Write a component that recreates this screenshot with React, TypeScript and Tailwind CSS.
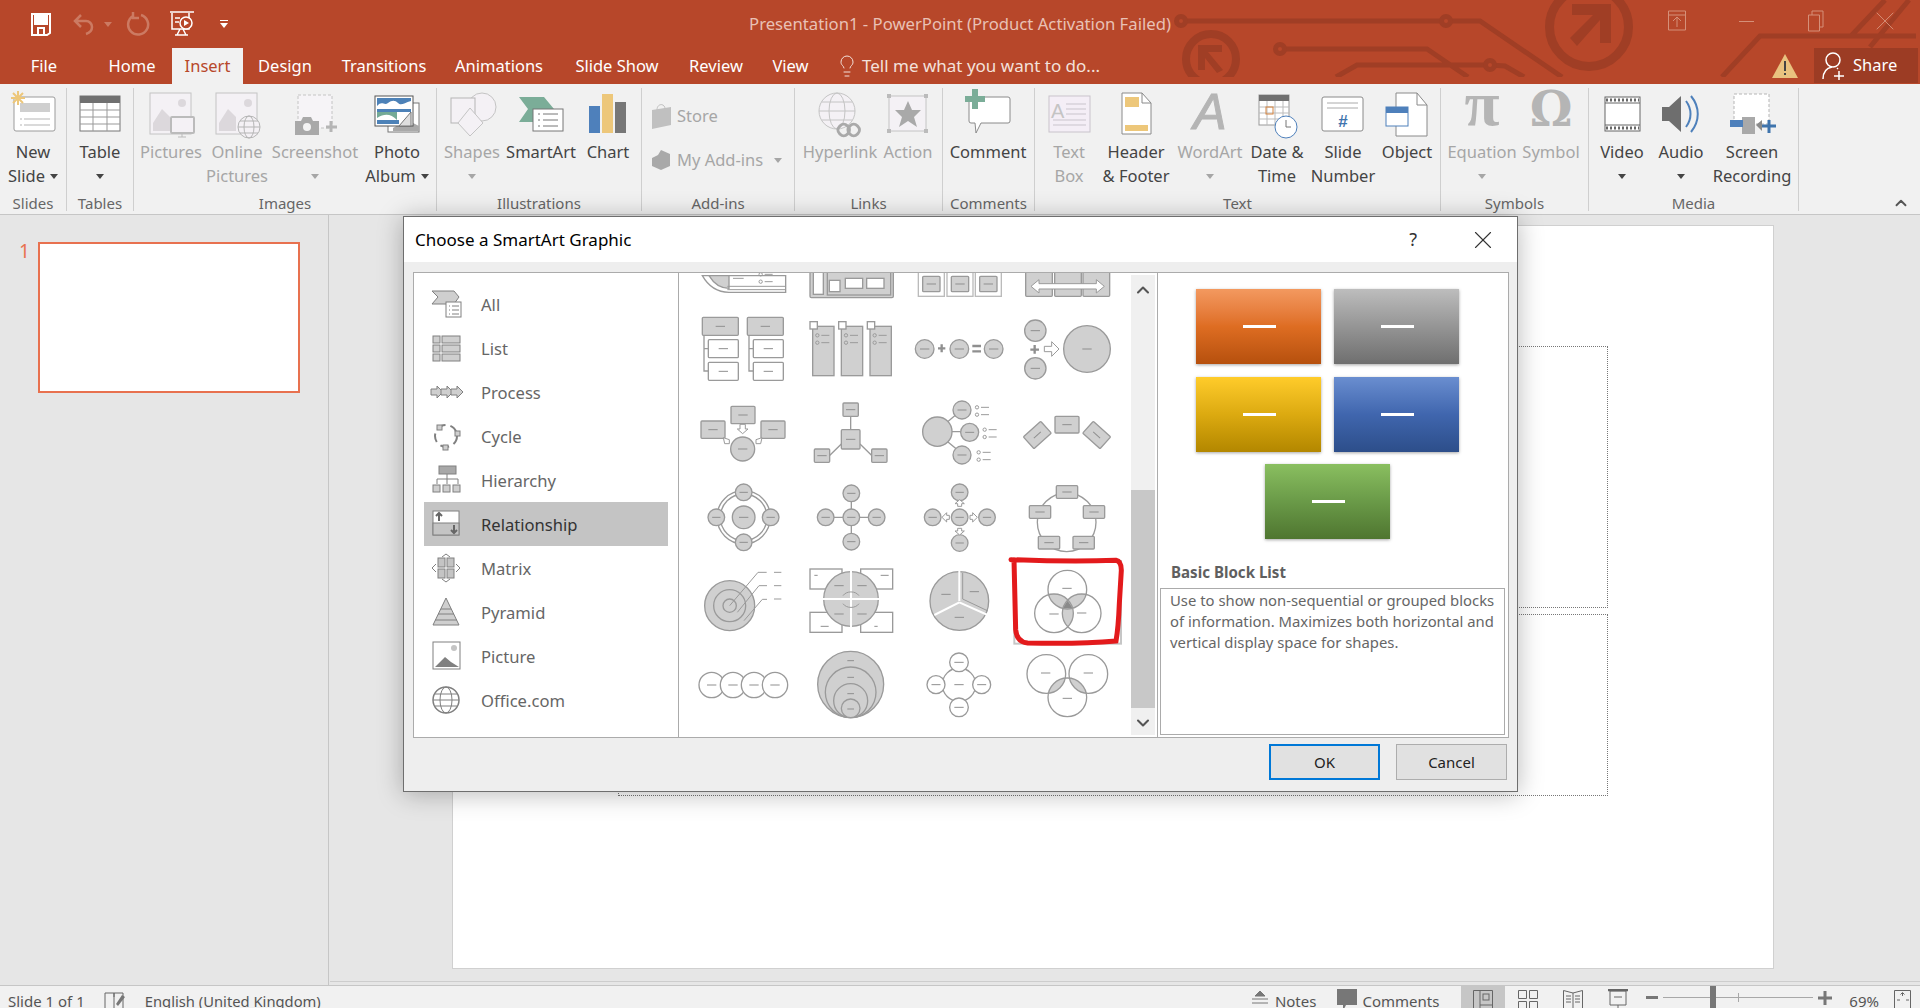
import type { ReactNode } from "react";
import { ChevronUp, ChevronDown, X, Lightbulb } from "lucide-react";

const LINE = "#9a9a9a";
const FILL = "#d0d0d0";

// ---- ribbon icons: x is relative to the button centre, y is page y
const Ic = ({ children }: { children: ReactNode }) => (
  <svg width={70} height={53} viewBox="-35 88 70 53" className="overflow-visible">
    {children}
  </svg>
);

const Caret = ({ className = "" }: { className?: string }) => (
  <svg width="8" height="5" viewBox="0 0 8 5" className={className}>
    <path d="M0 0h8L4 5z" fill="currentColor" />
  </svg>
);

const iconNewSlide = (
  <Ic>
    <rect x="-19" y="97" width="41" height="34" rx="2" fill="#fff" stroke="#9b9b9b" />
    <rect x="-13" y="103" width="30" height="9" fill="#cfcfcf" />
    <path d="M-13 119h2M-9 119h26M-13 125h2M-9 125h26" stroke="#b5b5b5" />
    <path d="M-15 91v14M-22 98h14M-20 93l10 10M-20 103l10-10" stroke="#edc77a" strokeWidth="2" />
  </Ic>
);
const iconTable = (
  <Ic>
    <rect x="-20" y="96" width="40" height="35" fill="#fff" stroke="#777" />
    <rect x="-20" y="96" width="40" height="7" fill="#707070" />
    <path d="M-20 110h40M-20 117h40M-20 124h40M-7 103v28M7 103v28" stroke="#999" />
  </Ic>
);
const iconPictures = (
  <Ic>
    <rect x="-21" y="93" width="41" height="41" fill="#f4f1f5" stroke="#c4c4c4" />
    <circle cx="11" cy="103" r="4" fill="#dcd8dc" />
    <path d="M-18 131v-8l9-14 8 8v14z" fill="#dcd8dc" />
    <rect x="0" y="117" width="23" height="16" rx="1" fill="#f4f1f5" stroke="#bbb" strokeWidth="2" />
    <path d="M11 133v4M7 137h8" stroke="#bbb" />
  </Ic>
);
const iconOnlinePictures = (
  <Ic>
    <rect x="-21" y="93" width="41" height="41" fill="#f4f1f5" stroke="#c4c4c4" />
    <circle cx="11" cy="103" r="4" fill="#dcd8dc" />
    <path d="M-18 131v-8l9-14 8 8v14z" fill="#dcd8dc" />
    <circle cx="12" cy="127" r="11" fill="#f4f1f5" stroke="#b5b5b5" />
    <ellipse cx="12" cy="127" rx="5" ry="11" fill="none" stroke="#b5b5b5" />
    <path d="M1 127h22M3 121h18M3 133h18" stroke="#b5b5b5" />
  </Ic>
);
const iconScreenshot = (
  <Ic>
    <rect x="-17" y="95" width="34" height="33" fill="#f6f4f7" stroke="#c4c4c4" strokeDasharray="3 2" />
    <path d="M-20 121h6l2-4h8l2 4h6v14h-24z" fill="#a9a9a9" />
    <circle cx="-8" cy="127" r="4" fill="#f4f4f4" />
    <path d="M16 121v11M11 127h11" stroke="#b5b5b5" strokeWidth="3" />
  </Ic>
);
const iconPhotoAlbum = (
  <Ic>
    <rect x="-9" y="103" width="31" height="29" fill="#fff" stroke="#777" />
    <path d="M-4 128l14-8 12 6v5H-4z" fill="#a9a9a9" />
    <rect x="-22" y="96" width="38" height="30" fill="#fff" stroke="#555" />
    <rect x="-20" y="98" width="34" height="14" fill="#4d82b8" />
    <path d="M-20 106c5-6 7 0 11-3s7-3 10 0 6 0 13-2v8h-34z" fill="#fff" />
    <path d="M-20 118c8-5 14-4 20 2v-8h-20z" fill="#74aa96" />
    <rect x="-20" y="120" width="22" height="4" fill="#4d82b8" />
    <path d="M2 126l12-14v14z" fill="#dfdfdf" stroke="#777" />
  </Ic>
);
const iconShapes = (
  <Ic>
    <circle cx="10" cy="107" r="14" fill="#f4f1f5" stroke="#c4c4c4" />
    <rect x="-21" y="98" width="24" height="25" fill="#f4f1f5" stroke="#b5b5b5" />
    <path d="M-2 108L11 123-2 136-14 123z" fill="#f4f1f5" stroke="#c4c4c4" />
  </Ic>
);
const iconSmartArt = (
  <Ic>
    <path d="M-22 97h25l10 12-10 13h-25l9-13z" fill="#7bad98" />
    <rect x="-8" y="109" width="30" height="22" fill="#fff" stroke="#777" />
    <path d="M-3 114h2M2 114h15M-3 120h2M2 120h15M-3 126h2M2 126h15" stroke="#777" />
  </Ic>
);
const iconChart = (
  <Ic>
    <rect x="-19" y="106" width="11" height="27" fill="#4e80bb" />
    <rect x="-6" y="94" width="11" height="39" fill="#edc77a" />
    <rect x="7" y="102" width="11" height="31" fill="#777" />
  </Ic>
);
const iconHyperlink = (
  <Ic>
    <circle cx="-3" cy="111" r="18" fill="#f4f1f5" stroke="#c4c4c4" />
    <ellipse cx="-3" cy="111" rx="8" ry="18" fill="none" stroke="#c4c4c4" />
    <path d="M-21 111h36M-18 102h30M-18 120h30" stroke="#c4c4c4" />
    <rect x="-2" y="125" width="11" height="11" rx="5" fill="none" stroke="#a9a9a9" strokeWidth="3" transform="rotate(-45 3 130)" />
    <rect x="8" y="125" width="11" height="11" rx="5" fill="none" stroke="#a9a9a9" strokeWidth="3" transform="rotate(-45 13 130)" />
  </Ic>
);
const iconAction = (
  <Ic>
    <rect x="-19" y="96" width="37" height="35" fill="#f4f1f5" stroke="#c4c4c4" />
    <path d="M-21 94h4v4h-4zM16 94h4v4h-4zM-21 129h4v4h-4zM16 129h4v4h-4z" fill="#bbb" />
    <path d="M0 101l4 9h9l-7 7 3 10-9-6-9 6 3-10-7-7h9z" fill="#a9a9a9" />
  </Ic>
);
const iconComment = (
  <Ic>
    <path d="M-17 97h37a2 2 0 012 2v22a2 2 0 01-2 2h-27l-5 10-1-10h-4a2 2 0 01-2-2V99a2 2 0 012-2z" fill="#fff" stroke="#8a8a8a" />
    <path d="M-13 89v20M-23 99h20" stroke="#7bad98" strokeWidth="6" />
  </Ic>
);
const iconTextBox = (
  <Ic>
    <rect x="-20" y="96" width="41" height="36" fill="#f4eef6" stroke="#c9c4cc" />
    <text x="-18" y="118" fontSize="20" fill="#c4c4c4" fontFamily="Liberation Sans, sans-serif">A</text>
    <path d="M-3 104h20M-3 109h20M-3 114h20M-16 120h33M-16 125h33" stroke="#c9c4cc" />
  </Ic>
);
const iconHeader = (
  <Ic>
    <path d="M-14 93h20l9 10v31h-29z" fill="#fff" stroke="#8a8a8a" />
    <path d="M6 93v10h9" fill="none" stroke="#8a8a8a" />
    <rect x="-11" y="97" width="14" height="10" fill="#edc77a" />
    <rect x="-11" y="125" width="23" height="6" fill="#edc77a" />
  </Ic>
);
const iconWordArt = (
  <Ic>
    <text x="0" y="129" textAnchor="middle" fontSize="50" fontStyle="italic" fill="#b5b5b5" stroke="#b5b5b5" strokeWidth="1" fontFamily="Liberation Sans, sans-serif">A</text>
  </Ic>
);
const iconDate = (
  <Ic>
    <rect x="-18" y="95" width="30" height="30" fill="#fff" stroke="#999" />
    <rect x="-18" y="95" width="30" height="6" fill="#707070" />
    <path d="M-18 107h30M-18 113h30M-18 119h30M-10 101v24M-2 101v24M6 101v24" stroke="#bbb" />
    <rect x="-11" y="107" width="7" height="7" fill="none" stroke="#d6843e" />
    <circle cx="9" cy="127" r="11" fill="#fff" stroke="#4e80bb" />
    <path d="M9 120v7h5" fill="none" stroke="#777" />
  </Ic>
);
const iconSlideNumber = (
  <Ic>
    <rect x="-21" y="97" width="41" height="34" rx="2" fill="#fff" stroke="#8a8a8a" />
    <path d="M-16 103h31M-16 108h31" stroke="#aaa" />
    <text x="0" y="127" textAnchor="middle" fontSize="17" fontWeight="700" fill="#3f74ad" fontFamily="Liberation Sans, sans-serif">#</text>
  </Ic>
);
const iconObject = (
  <Ic>
    <path d="M-11 93h21l10 12v31h-31z" fill="#fff" stroke="#8a8a8a" />
    <path d="M10 93v12h10" fill="none" stroke="#8a8a8a" />
    <rect x="-21" y="107" width="22" height="19" fill="#fff" stroke="#4e80bb" />
    <rect x="-21" y="107" width="22" height="6" fill="#4e80bb" />
  </Ic>
);
const iconPi = (
  <Ic>
    <text x="0" y="125" textAnchor="middle" fontSize="64" fontWeight="700" fill="#b5b5b5" fontFamily="Liberation Serif, serif">π</text>
  </Ic>
);
const iconOmega = (
  <Ic>
    <text x="0" y="126" textAnchor="middle" fontSize="48" fontWeight="700" fill="#b5b5b5" fontFamily="DejaVu Serif, serif">Ω</text>
  </Ic>
);
const iconVideo = (
  <Ic>
    <rect x="-17" y="97" width="35" height="34" fill="#fff" stroke="#666" />
    <path d="M-17 103h35M-17 125h35" stroke="#666" />
    <path d="M-16 100h33M-16 128h33" stroke="#666" strokeWidth="3" strokeDasharray="2 2" />
  </Ic>
);
const iconAudio = (
  <Ic>
    <path d="M-19 107h7l12-11v36l-12-11h-7z" fill="#6e6e6e" />
    <path d="M5 101c6 8 6 18 0 26M10 96c9 11 9 25 0 36" fill="none" stroke="#4e80bb" strokeWidth="2" />
  </Ic>
);
const iconScreenRec = (
  <Ic>
    <rect x="-18" y="94" width="35" height="30" fill="#fff" stroke="#b5b5b5" strokeDasharray="3 2" />
    <rect x="-10" y="117" width="13" height="17" fill="#a9a9a9" />
    <path d="M4 125l6-5v11z" fill="#8a8a8a" />
    <rect x="-22" y="120" width="13" height="7" fill="#4e80bb" />
    <path d="M17 120v13M10 126h14" stroke="#3f74ad" strokeWidth="3" />
  </Ic>
);

// ---- ribbon
type Btn = {
  w: number;
  lines: string[];
  icon: ReactNode;
  off?: boolean;
  caret?: "inline" | "below";
};

const RibbonBtn = ({ w, lines, icon, off, caret }: Btn) => (
  <div
    style={{ width: w }}
    className={`flex flex-col items-center shrink-0 ${off ? "text-[#a6a6a6]" : "text-[#444]"}`}
  >
    <div className="h-[53px]">{icon}</div>
    <div className="-mt-[1px] text-[16.5px] leading-[24px] text-center whitespace-nowrap">
      {lines.map((l, i) => (
        <div key={l} className="flex items-center justify-center gap-[5px]">
          {l}
          {caret === "inline" && i === lines.length - 1 && <Caret />}
        </div>
      ))}
      {caret === "below" && (
        <div className="h-[24px] flex items-center justify-center">
          <Caret />
        </div>
      )}
    </div>
  </div>
);

const Group = ({
  w,
  label,
  pl = 0,
  children,
}: {
  w: number;
  label: string;
  pl?: number;
  children: ReactNode;
}) => (
  <div style={{ width: w }} className="h-[123px] shrink-0 border-r border-[#cfcfcf]">
    <div style={{ paddingLeft: pl }} className="h-[105px] flex">
      {children}
    </div>
    <div className="h-[18px] leading-[20px] text-center text-[15px] text-[#666] whitespace-nowrap">
      {label}
    </div>
  </div>
);

const tabs = [
  { t: "File", w: 88 },
  { t: "Home", w: 80, ml: 4 },
  { t: "Insert", w: 71, on: true },
  { t: "Design", w: 84 },
  { t: "Transitions", w: 114 },
  { t: "Animations", w: 116 },
  { t: "Slide Show", w: 120 },
  { t: "Review", w: 78 },
  { t: "View", w: 71 },
];

const TitleArt = () => (
  <svg width="760" height="77" viewBox="1160 0 760 77" className="absolute right-0 top-0">
    <g fill="none" stroke="#a03e25" strokeWidth="5">
      <path d="M1186 21h294l82 56M1280 49h147l41 28M1336 77l21-12h133l15 1 19 11" />
      <path d="M1722 77l38-41h156M1851 36l34-36M1870 47l39-47" />
      <circle cx="1589" cy="27" r="39.5" strokeWidth="9" />
      <circle cx="1211" cy="59" r="25" strokeWidth="8" />
      <circle cx="1181" cy="21" r="4.5" fill="#b7472a" />
      <circle cx="1446" cy="21" r="4.5" fill="#b7472a" />
      <circle cx="1280" cy="49" r="4.5" fill="#b7472a" />
      <circle cx="1490" cy="65" r="4.5" fill="#b7472a" />
    </g>
    <path d="M1572 4h39v39h-11V20l-23 26-7-8 23-23h-21z" fill="#a03e25" />
    <path d="M1198 45h24v7h-14l15 18-6 3-12-15v12h-7z" fill="#a03e25" />
  </svg>
);

// ---- smartart gallery, coordinates are 3x the page px
const Dash = ({ x, y, w = 28 }: { x: number; y: number; w?: number }) => (
  <path d={`M${x - w / 2} ${y}h${w}`} stroke="#8f8f8f" strokeWidth="3" />
);
const C = ({ x, y, r, white, dash = true }: { x: number; y: number; r: number; white?: boolean; dash?: boolean }) => (
  <>
    <circle cx={x} cy={y} r={r} fill={white ? "#fff" : FILL} stroke={LINE} strokeWidth="4" />
    {dash && <Dash x={x} y={y} w={Math.min(28, r)} />}
  </>
);
const B = ({ x, y, w, h, white, dash = true }: { x: number; y: number; w: number; h: number; white?: boolean; dash?: boolean }) => (
  <>
    <rect x={x} y={y} width={w} height={h} rx="3" fill={white ? "#fff" : FILL} stroke={LINE} strokeWidth="4" />
    {dash && <Dash x={x + w / 2} y={y + h / 2} />}
  </>
);
const Bullets = ({ x, y }: { x: number; y: number }) => (
  <>
    <circle cx={x} cy={y} r="5" fill="none" stroke={LINE} strokeWidth="3" />
    <circle cx={x} cy={y + 22} r="5" fill="none" stroke={LINE} strokeWidth="3" />
    <path d={`M${x + 12} ${y}h24M${x + 12} ${y + 22}h24`} stroke={LINE} strokeWidth="3" />
  </>
);
const Lens = ({ id, a, b }: { id: string; a: number[]; b: number[] }) => (
  <>
    <clipPath id={id}>
      <circle cx={a[0]} cy={a[1]} r={a[2]} />
    </clipPath>
    <circle cx={b[0]} cy={b[1]} r={b[2]} fill={FILL} clipPath={`url(#${id})`} />
  </>
);

const Column = ({ x }: { x: number }) => (
  <>
    <rect x={x} y="182" width="64" height="148" fill={FILL} stroke={LINE} strokeWidth="4" />
    <rect x={x - 8} y="168" width="22" height="22" fill="#fff" stroke={LINE} strokeWidth="4" />
    <Bullets x={x + 14} y={209} />
  </>
);
const Cascade = ({ x }: { x: number }) => (
  <>
    <path d={`M${x + 5} 209V316h18M${x + 5} 249h18`} fill="none" stroke={LINE} strokeWidth="4" />
    <B x={x} y={155} w={108} h={54} />
    <B x={x + 18} y={222} w={90} h={54} white />
    <B x={x + 18} y={290} w={90} h={54} white />
  </>
);
const SmallArrow = ({ d }: { d: string }) => <path d={d} fill="#fff" stroke={LINE} strokeWidth="3" />;
const Quad = ({ x, y }: { x: number; y: number }) => (
  <>
    <rect x={x} y={y} width="96" height="60" fill="#fff" stroke={LINE} strokeWidth="4" />
  </>
);

const thumbs: ReactNode[][] = [
  [
    <>
      <path d="M80 30c20 35 45 50 80 50h170V30z" fill="#fff" stroke={LINE} strokeWidth="4" />
      <path d="M100 30c15 25 35 38 60 38V30z" fill={FILL} stroke={LINE} strokeWidth="4" />
      <path d="M155 62h175M155 72h175M172 38h32" stroke={LINE} strokeWidth="3" />
      <Bullets x={255} y={26} />
    </>,
    <>
      <rect x="404" y="10" width="250" height="86" rx="4" fill={FILL} stroke={LINE} strokeWidth="4" />
      <rect x="414" y="10" width="30" height="76" fill="#fff" stroke={LINE} strokeWidth="4" />
      <rect x="456" y="20" width="190" height="68" fill={FILL} stroke={LINE} strokeWidth="4" />
      <rect x="462" y="44" width="32" height="34" fill="#fff" stroke={LINE} strokeWidth="4" />
      <rect x="510" y="38" width="52" height="30" fill="#fff" stroke={LINE} strokeWidth="4" />
      <rect x="574" y="38" width="52" height="30" fill="#fff" stroke={LINE} strokeWidth="4" />
    </>,
    <>
      {[727, 813, 898].map((x) => (
        <g key={x}>
          <rect x={x} y="10" width="78" height="82" fill="#fff" stroke="#bbb" strokeWidth="4" />
          <B x={x + 13} y={32} w={52} h={46} />
        </g>
      ))}
    </>,
    <>
      {[1050, 1137, 1222].map((x) => (
        <rect key={x} x={x} y="10" width="80" height="82" rx="3" fill={FILL} stroke={LINE} strokeWidth="4" />
      ))}
      <path d="M1066 62l24-20v12h172V42l24 20-24 20V70H1090v12z" fill="#fff" stroke={LINE} strokeWidth="3" />
    </>,
  ],
  [
    <>
      <Cascade x={80} />
      <Cascade x={215} />
    </>,
    <>
      <Column x={412} />
      <Column x={498} />
      <Column x={584} />
    </>,
    <>
      <C x={746} y={250} r={28} />
      <C x={850} y={250} r={28} />
      <C x={953} y={250} r={28} />
      <path d="M786 248h22M797 236v24" stroke="#8f8f8f" strokeWidth="7" />
      <path d="M889 241h26M889 257h26" stroke="#8f8f8f" strokeWidth="7" />
    </>,
    <>
      <C x={1079} y={195} r={32} />
      <C x={1079} y={308} r={32} />
      <path d="M1064 252h26M1077 238v26" stroke="#8f8f8f" strokeWidth="7" />
      <SmallArrow d="M1106 242h22v-14l22 22-22 22v-14h-22z" />
      <C x={1234} y={250} r={70} />
    </>,
  ],
  [
    <>
      <B x={166} y={422} w={72} h={52} />
      <B x={76} y={466} w={72} h={52} />
      <B x={256} y={466} w={72} h={52} />
      <C x={201} y={550} r={36} />
      <SmallArrow d="M193 476h16v14h8l-16 14-16-14h8z" />
      <SmallArrow d="M143 516l18 6v12h-14z" />
      <SmallArrow d="M259 516l-18 6v12h14z" />
    </>,
    <>
      <path d="M526 452v40M498 535l-36 35M554 535l36 35" stroke={LINE} strokeWidth="4" />
      <B x={503} y={412} w={46} h={40} />
      <B x={498} y={492} w={56} h={58} />
      <B x={417} y={550} w={46} h={40} />
      <B x={589} y={550} w={46} h={40} />
    </>,
    <>
      <path d="M815 468l30-25M828 498h26M815 528l30 25" stroke={LINE} strokeWidth="4" />
      <C x={784} y={498} r={44} dash={false} />
      <C x={858} y={433} r={27} />
      <C x={881} y={500} r={27} />
      <C x={858} y={568} r={27} />
      <Bullets x={903} y={425} />
      <Bullets x={926} y={492} />
      <Bullets x={908} y={560} />
    </>,
    <>
      <B x={1138} y={452} w={72} h={50} />
      <g transform="rotate(-42 1085 508)">
        <B x={1050} y={484} w={70} h={48} />
      </g>
      <g transform="rotate(42 1263 508)">
        <B x={1228} y={484} w={70} h={48} />
      </g>
    </>,
  ],
  [
    <>
      <circle cx="204" cy="755" r="80" fill="#fff" stroke={LINE} strokeWidth="4" />
      <circle cx="204" cy="755" r="70" fill="#fff" stroke={LINE} strokeWidth="4" />
      <C x={204} y={755} r={34} />
      <C x={204} y={680} r={25} />
      <C x={122} y={755} r={25} />
      <C x={285} y={755} r={25} />
      <C x={204} y={830} r={25} />
    </>,
    <>
      <path d="M528 683v145M451 755h153" stroke={LINE} strokeWidth="4" />
      <C x={528} y={755} r={25} />
      <C x={528} y={683} r={25} />
      <C x={451} y={755} r={25} />
      <C x={604} y={755} r={25} />
      <C x={528} y={828} r={25} />
    </>,
    <>
      <C x={851} y={755} r={25} />
      <C x={851} y={680} r={25} />
      <C x={770} y={755} r={25} />
      <C x={933} y={755} r={25} />
      <C x={851} y={832} r={25} />
      <SmallArrow d="M845 722v-8h-8l14-12 14 12h-8v8z" />
      <SmallArrow d="M845 788v8h-8l14 12 14-12h-8v-8z" />
      <SmallArrow d="M820 749h-8v-8l-14 14 14 14v-8h8z" />
      <SmallArrow d="M882 749h8v-8l14 14-14 14v-8h-8z" />
    </>,
    <>
      <circle cx="1173" cy="770" r="88" fill="#fff" stroke={LINE} strokeWidth="4" />
      <B x={1142} y={660} w={64} h={38} />
      <B x={1061} y={720} w={64} h={38} />
      <B x={1223} y={720} w={64} h={38} />
      <B x={1088} y={812} w={64} h={38} />
      <B x={1192} y={812} w={64} h={38} />
    </>,
  ],
  [
    <>
      <circle cx="162" cy="1020" r="75" fill={FILL} stroke={LINE} strokeWidth="4" />
      <circle cx="162" cy="1020" r="48" fill={FILL} stroke={LINE} strokeWidth="4" />
      <circle cx="162" cy="1020" r="20" fill={FILL} stroke={LINE} strokeWidth="4" />
      <path d="M162 1020l85-100h26M185 1040l65-80h24M205 1065l55-64h14" fill="none" stroke={LINE} strokeWidth="3" />
      <path d="M295 920h22M295 960h22M295 1000h22" stroke={LINE} strokeWidth="3" />
    </>,
    <>
      <Quad x={404} y={910} />
      <Quad x={556} y={910} />
      <Quad x={404} y={1040} />
      <Quad x={556} y={1040} />
      <Dash x={422} y={929} w={10} />
      <Dash x={628} y={929} w={24} />
      <Dash x={448} y={1082} w={24} />
      <Dash x={602} y={1082} w={10} />
      <circle cx="527" cy="1000" r="82" fill={FILL} stroke={LINE} strokeWidth="4" />
      <path d="M527 915v170M442 1000h170" stroke="#fff" strokeWidth="6" />
      <Dash x={491} y={960} />
      <Dash x={560} y={960} />
      <Dash x={491} y={1045} />
      <Dash x={560} y={1045} />
      <path d="M503 990c10-15 38-15 48 0M503 1014c10 15 38 15 48 0" fill="none" stroke={LINE} strokeWidth="3" />
    </>,
    <>
      <circle cx="850" cy="1006" r="88" fill={FILL} stroke={LINE} strokeWidth="4" />
      <path d="M850 1006V915M850 1010l85 38M850 1010l-75 38" stroke="#fff" strokeWidth="6" />
      <path d="M860 922v78l76 36" fill="none" stroke={LINE} strokeWidth="3" />
      <Dash x={810} y={986} />
      <Dash x={895} y={978} />
      <Dash x={850} y={1055} />
    </>,
    <>
      <rect x="1016" y="886" width="320" height="248" fill="#fff" stroke="#c6c6c6" strokeWidth="6" />
      <Lens id="l1" a={[1175, 972, 58]} b={[1135, 1043, 58]} />
      <Lens id="l2" a={[1175, 972, 58]} b={[1218, 1043, 58]} />
      <Lens id="l3" a={[1135, 1043, 58]} b={[1218, 1043, 58]} />
      <path d="M1176 1005l15 22h-30z" fill="#8a8a8a" />
      <circle cx="1175" cy="972" r="58" fill="none" stroke={LINE} strokeWidth="4" />
      <circle cx="1135" cy="1043" r="58" fill="none" stroke={LINE} strokeWidth="4" />
      <circle cx="1218" cy="1043" r="58" fill="none" stroke={LINE} strokeWidth="4" />
      <Dash x={1174} y={968} />
      <Dash x={1135} y={1045} />
      <Dash x={1218} y={1042} />
      <path
        d="M1006 882c100 4 210 6 315 2 12 2 16 12 16 30l-6 100c-2 50-6 90-10 112-90 8-180 8-265 6-20-2-34-14-36-40l-5-210"
        fill="none"
        stroke="#e31a1c"
        strokeWidth="15"
        strokeLinecap="round"
      />
    </>,
  ],
  [
    <>
      {[108, 172, 235, 298].map((x) => (
        <C key={x} x={x} y={1258} r={38} white />
      ))}
    </>,
    <>
      <circle cx="526" cy="1256" r="99" fill={FILL} stroke={LINE} strokeWidth="4" />
      <circle cx="526" cy="1280" r="76" fill={FILL} stroke={LINE} strokeWidth="4" />
      <circle cx="526" cy="1305" r="51" fill={FILL} stroke={LINE} strokeWidth="4" />
      <circle cx="526" cy="1328" r="28" fill={FILL} stroke={LINE} strokeWidth="4" />
      <Dash x={526} y={1185} w={20} />
      <Dash x={526} y={1235} w={20} />
      <Dash x={526} y={1284} w={20} />
      <Dash x={526} y={1330} w={20} />
    </>,
    <>
      <C x={849} y={1257} r={50} white />
      <C x={849} y={1190} r={28} white />
      <C x={780} y={1257} r={27} white />
      <C x={917} y={1257} r={27} white />
      <C x={849} y={1325} r={28} white />
    </>,
    <>
      <Lens id="l4" a={[1112, 1225, 58]} b={[1175, 1295, 58]} />
      <Lens id="l5" a={[1238, 1225, 58]} b={[1175, 1295, 58]} />
      <circle cx="1112" cy="1225" r="58" fill="none" stroke={LINE} strokeWidth="4" />
      <circle cx="1238" cy="1225" r="58" fill="none" stroke={LINE} strokeWidth="4" />
      <circle cx="1175" cy="1295" r="58" fill="none" stroke={LINE} strokeWidth="4" />
      <Dash x={1110} y={1222} />
      <Dash x={1238} y={1222} />
      <Dash x={1175} y={1298} />
    </>,
  ],
];

// ---- category list icons, 32x30 centred
const LI = ({ children }: { children: ReactNode }) => (
  <svg width="32" height="30" viewBox="0 0 32 30" className="overflow-visible">
    {children}
  </svg>
);
const G = "#a8a8a8";
const S = "#808080";
const categories: { t: string; icon: ReactNode }[] = [
  {
    t: "All",
    icon: (
      <LI>
        <path d="M2 2h22l5 6-5 7H2l6-7z" fill="#cfcfcf" stroke={S} />
        <rect x="16" y="13" width="15" height="15" fill="#fff" stroke={S} />
        <path d="M19 17h1M22 17h7M19 21h1M22 21h7M19 25h1M22 25h7" stroke={S} />
      </LI>
    ),
  },
  {
    t: "List",
    icon: (
      <LI>
        {[3, 12, 21].map((y) => (
          <g key={y}>
            <rect x="3" y={y} width="7" height="7" fill="#cfcfcf" stroke={S} />
            <rect x="12" y={y} width="18" height="7" fill="#cfcfcf" stroke={S} />
          </g>
        ))}
      </LI>
    ),
  },
  {
    t: "Process",
    icon: (
      <LI>
        {[0, 10, 20].map((x) => (
          <path key={x} d={`M${x + 1} 12h6v-3l6 6-6 6v-3h-6z`} fill="#cfcfcf" stroke={S} />
        ))}
      </LI>
    ),
  },
  {
    t: "Cycle",
    icon: (
      <LI>
        <circle cx="16" cy="15" r="11" fill="none" stroke={S} strokeWidth="2" strokeDasharray="9 5" />
        <rect x="7" y="4" width="5" height="5" fill="#cfcfcf" stroke={S} />
        <rect x="25" y="10" width="5" height="5" fill="#cfcfcf" stroke={S} />
        <rect x="13" y="24" width="5" height="5" fill="#cfcfcf" stroke={S} />
      </LI>
    ),
  },
  {
    t: "Hierarchy",
    icon: (
      <LI>
        <rect x="9" y="1" width="17" height="8" fill={G} stroke={S} />
        <path d="M17 9v5M7 19v-5h21v5M17 14v5" fill="none" stroke={S} />
        {[3, 13, 23].map((x) => (
          <rect key={x} x={x} y="20" width="7" height="7" fill="#cfcfcf" stroke={S} />
        ))}
      </LI>
    ),
  },
  {
    t: "Relationship",
    icon: (
      <LI>
        <rect x="3" y="2" width="26" height="24" fill="#fff" stroke={S} />
        <rect x="3" y="14" width="26" height="12" fill="#c4c4c4" stroke={S} />
        <path d="M9 12V4M6 7l3-3 3 3M24 16v8M21 21l3 3 3-3" fill="none" stroke="#666" strokeWidth="2" />
      </LI>
    ),
  },
  {
    t: "Matrix",
    icon: (
      <LI>
        <path d="M12 4l4-3 4 3M12 26l4 3 4-3M6 11l-4 4 4 4M26 11l4 4-4 4" fill="none" stroke={S} />
        <rect x="8" y="5" width="7" height="9" fill="#c4c4c4" stroke={S} />
        <rect x="17" y="5" width="7" height="9" fill="#c4c4c4" stroke={S} />
        <rect x="8" y="16" width="7" height="9" fill="#c4c4c4" stroke={S} />
        <rect x="17" y="16" width="7" height="9" fill="#c4c4c4" stroke={S} />
      </LI>
    ),
  },
  {
    t: "Pyramid",
    icon: (
      <LI>
        <path d="M16 1l13 27H3z" fill="#cfcfcf" stroke={S} />
        <path d="M11 12h10M8 17h16M5 23h22" stroke={S} />
      </LI>
    ),
  },
  {
    t: "Picture",
    icon: (
      <LI>
        <rect x="3" y="1" width="27" height="27" fill="#fff" stroke={S} />
        <circle cx="24" cy="7" r="3" fill="#c4c4c4" />
        <path d="M5 26l10-10 6 5 8 5z" fill="#808080" />
      </LI>
    ),
  },
  {
    t: "Office.com",
    icon: (
      <LI>
        <circle cx="16" cy="15" r="13" fill="#fff" stroke={S} strokeWidth="1.5" />
        <ellipse cx="16" cy="15" rx="6" ry="13" fill="none" stroke={S} />
        <path d="M3 15h26M5 9h22M5 21h22" stroke={S} />
      </LI>
    ),
  },
];

const blocks = [
  "from-[#f3995f] via-[#de6d22] to-[#b6500d]",
  "from-[#bdbdbd] via-[#959595] to-[#6f6f6f]",
  "from-[#ffcc2a] via-[#dcaa10] to-[#b38700]",
  "from-[#6a8ed0] via-[#4066ae] to-[#2d4e8a]",
  "from-[#8abf60] via-[#6a9a48] to-[#4f7630]",
];

export default function App() {
  return (
    <div className="relative w-[1920px] h-[1008px] overflow-hidden flex flex-col bg-[#e6e6e6] font-['Noto_Sans',sans-serif]">
      {/* Title bar */}
      <div className="relative h-[84px] shrink-0 bg-[#b7472a] text-white">
        <TitleArt />
        <div className="relative h-[48px] flex items-center">
          <div className="flex items-center pl-[31px]">
            <svg width="20" height="24" viewBox="0 0 20 24">
              <path d="M1 2h18v19l-3 2H1z" fill="none" stroke="#fff" strokeWidth="2" />
              <rect x="3" y="3" width="14" height="10" fill="#fff" />
              <rect x="7" y="16" width="6" height="7" fill="none" stroke="#fff" strokeWidth="2" />
            </svg>
            <svg width="26" height="24" viewBox="0 0 26 24" className="ml-[21px]">
              <path d="M9 3L3 9l6 6M3 9h11a6 6 0 016 6c0 4-3 6-6 7" fill="none" stroke="#cc7a62" strokeWidth="2.5" />
            </svg>
            <span className="ml-[6px] text-[#cc7a62]">
              <Caret />
            </span>
            <svg width="24" height="26" viewBox="0 0 24 26" className="ml-[14px]">
              <path d="M15 4a10 10 0 11-8 1M7 1v6h6" fill="none" stroke="#cc7a62" strokeWidth="2.5" />
            </svg>
            <svg width="26" height="28" viewBox="0 0 26 28" className="ml-[19px]">
              <path d="M1 2h24M3 3v16h17V3M11 19l-3 6M14 19l3 6M6 25h13" fill="none" stroke="#fff" strokeWidth="1.5" />
              <circle cx="17" cy="13" r="6" fill="#b7472a" stroke="#fff" strokeWidth="1.5" />
              <path d="M15 10l5 3-5 3z" fill="#fff" />
              <path d="M6 8h5M6 12h4" stroke="#fff" strokeWidth="1.5" />
            </svg>
            <div className="ml-[25px] flex flex-col items-center gap-[2px]">
              <div className="w-[8px] h-[1.5px] bg-white" />
              <Caret />
            </div>
          </div>
          <div className="absolute left-0 right-0 text-center text-[16.7px] text-[#e9c1b5] pointer-events-none">
            Presentation1 - PowerPoint (Product Activation Failed)
          </div>
          <div className="absolute left-[1668px] top-0 h-[42px] flex items-center text-[#d59079]">
            <svg width="18" height="22" viewBox="0 0 18 22">
              <path d="M.5 1h17v19H.5zM.5 5h17M9 17V8M5 11l4-4 4 4" fill="none" stroke="currentColor" />
            </svg>
            <div className="w-[15px] h-[1px] bg-[#d59079] ml-[53px]" />
            <svg width="16" height="22" viewBox="0 0 16 22" className="ml-[54px]">
              <path d="M.5 5h11v16H.5zM4 5V1h11v16h-3" fill="none" stroke="currentColor" />
            </svg>
            <X size={32} strokeWidth={0.7} className="ml-[45px]" />
          </div>
        </div>
        <div className="relative h-[36px] flex">
          {tabs.map((t) => (
            <div
              key={t.t}
              style={{ width: t.w, marginLeft: t.ml ?? 0 }}
              className={`flex items-center justify-center text-[16.5px] ${t.on ? "bg-[#f1f1f1] text-[#b7472a]" : ""}`}
            >
              {t.t}
            </div>
          ))}
          <div className="ml-[9px] flex items-center gap-[3px] text-[17px] text-[#f3e1db]">
            <Lightbulb size={24} strokeWidth={1} />
            Tell me what you want to do...
          </div>
          <svg width="30" height="26" viewBox="0 0 30 26" className="absolute left-[1770px] top-[5px]">
            <path d="M15 1l13 24H2z" fill="#e9c27f" />
            <path d="M15 8v10M15 20v2" stroke="#444" strokeWidth="2" />
          </svg>
          <div className="absolute left-[1814px] top-0 w-[104px] h-[35px] bg-[#9c3c24] flex items-center pl-[8px] gap-[7px] text-[16.5px]">
            <svg width="24" height="30" viewBox="0 0 24 30">
              <circle cx="11" cy="9" r="7" fill="none" stroke="#fff" strokeWidth="1.5" />
              <path d="M1 28c0-7 4-11 9-12M15 17l1 1M17 20v9M12 25h10" fill="none" stroke="#fff" strokeWidth="1.5" />
            </svg>
            Share
          </div>
        </div>
      </div>

      {/* Ribbon */}
      <div className="relative h-[131px] shrink-0 bg-[#f1f1f1] border-b border-[#c6c6c6] pt-[4px] flex">
        <Group w={67} label="Slides">
          <RibbonBtn w={66} lines={["New", "Slide"]} icon={iconNewSlide} caret="inline" />
        </Group>
        <Group w={67} label="Tables">
          <RibbonBtn w={66} lines={["Table"]} icon={iconTable} caret="below" />
        </Group>
        <Group w={303} label="Images" pl={3}>
          <RibbonBtn w={68} lines={["Pictures"]} icon={iconPictures} off />
          <RibbonBtn w={64} lines={["Online", "Pictures"]} icon={iconOnlinePictures} off />
          <RibbonBtn w={92} lines={["Screenshot"]} icon={iconScreenshot} off caret="below" />
          <RibbonBtn w={72} lines={["Photo", "Album"]} icon={iconPhotoAlbum} caret="inline" />
        </Group>
        <Group w={205} label="Illustrations">
          <RibbonBtn w={70} lines={["Shapes"]} icon={iconShapes} off caret="below" />
          <RibbonBtn w={68} lines={["SmartArt"]} icon={iconSmartArt} />
          <RibbonBtn w={66} lines={["Chart"]} icon={iconChart} />
        </Group>
        <Group w={153} label="Add-ins" pl={9}>
          <div className="flex flex-col text-[16.5px] text-[#a6a6a6]">
            <div className="h-[44px] mt-[6px] flex items-center gap-[5px]">
              <svg width="21" height="26" viewBox="0 0 21 26">
                <path d="M1 7l19-3v18L1 26z" fill="#c0c0c0" />
                <path d="M6 7c0-7 8-7 8-1" fill="none" stroke="#c0c0c0" />
              </svg>
              Store
            </div>
            <div className="h-[44px] flex items-center gap-[5px]">
              <svg width="21" height="22" viewBox="0 0 21 22">
                <path d="M10 1l9 4v12l-9 4-9-4V9l6-3z" fill="#a9a9a9" />
              </svg>
              My Add-ins
              <Caret className="ml-[6px]" />
            </div>
          </div>
        </Group>
        <Group w={148} label="Links">
          <RibbonBtn w={90} lines={["Hyperlink"]} icon={iconHyperlink} off />
          <RibbonBtn w={46} lines={["Action"]} icon={iconAction} off />
        </Group>
        <Group w={92} label="Comments">
          <RibbonBtn w={90} lines={["Comment"]} icon={iconComment} />
        </Group>
        <Group w={406} label="Text">
          <RibbonBtn w={68} lines={["Text", "Box"]} icon={iconTextBox} off />
          <RibbonBtn w={66} lines={["Header", "& Footer"]} icon={iconHeader} />
          <RibbonBtn w={82} lines={["WordArt"]} icon={iconWordArt} off caret="below" />
          <RibbonBtn w={52} lines={["Date &", "Time"]} icon={iconDate} />
          <RibbonBtn w={80} lines={["Slide", "Number"]} icon={iconSlideNumber} />
          <RibbonBtn w={48} lines={["Object"]} icon={iconObject} />
        </Group>
        <Group w={148} label="Symbols">
          <RibbonBtn w={82} lines={["Equation"]} icon={iconPi} off caret="below" />
          <RibbonBtn w={56} lines={["Symbol"]} icon={iconOmega} off />
        </Group>
        <Group w={210} label="Media">
          <RibbonBtn w={66} lines={["Video"]} icon={iconVideo} caret="below" />
          <RibbonBtn w={52} lines={["Audio"]} icon={iconAudio} caret="below" />
          <RibbonBtn w={90} lines={["Screen", "Recording"]} icon={iconScreenRec} />
        </Group>
        <ChevronUp size={18} strokeWidth={2.5} className="absolute left-[1892px] top-[110px] text-[#555]" />
      </div>

      {/* Workspace */}
      <div className="flex-1 min-h-0 flex">
        <div className="w-[329px] shrink-0 border-r border-[#c6c6c6] flex items-start pt-[26px] pl-[19px]">
          <span className="w-[19px] text-[19px] leading-[20px] text-[#e8714f]">1</span>
          <div className="w-[262px] h-[151px] mt-[1px] bg-white border-2 border-[#e8714f]" />
        </div>
        <div className="flex-1 pt-[10px] pl-[123px]">
          <div className="h-[757px] border-b border-[#cdcdcd] -ml-[122px] pl-[122px]">
            <div className="w-[1322px] h-[744px] bg-white border border-[#d0d0d0] pt-[120px] pl-[165px]">
              <div className="w-[990px] h-[262px] border border-dotted border-[#777]" />
              <div className="w-[990px] h-[182px] mt-[6px] border border-dotted border-[#777]" />
            </div>
          </div>
        </div>
      </div>

      {/* Status bar */}
      <div className="relative h-[23px] shrink-0 bg-[#f1f1f1] border-t border-[#c6c6c6] overflow-hidden flex text-[15px] text-[#555] leading-[30px] whitespace-nowrap">
        <span className="ml-[8px]">Slide 1 of 1</span>
        <svg width="22" height="20" viewBox="0 0 22 20" className="ml-[19px] mt-[6px]">
          <path d="M1 1h9v18H1zM10 5V1h9v18h-9" fill="none" stroke="#666" />
          <path d="M14 14l7-9-3-2-6 9z" fill="#777" />
        </svg>
        <span className="ml-[19px] text-[14.75px]">English (United Kingdom)</span>
        <div className="ml-auto pr-[9px] flex">
          <svg width="18" height="14" viewBox="0 0 18 14" className="mt-[5px]">
            <path d="M9 0l5 5H4zM1 8h16M1 12h16" fill="#777" stroke="#777" strokeWidth="1" />
          </svg>
          <span className="ml-[6px]">Notes</span>
          <svg width="20" height="22" viewBox="0 0 20 22" className="ml-[21px] mt-[3px]">
            <path d="M0 0h20v16H9l-3 6v-6H0z" fill="#777" />
          </svg>
          <span className="ml-[5px]">Comments</span>
          <div className="ml-[22px] w-[44px] h-[22px] bg-[#c6c6c6] flex justify-center pt-[4px]">
            <svg width="20" height="20" viewBox="0 0 20 20">
              <path d="M.5.5h19v19H.5zM7 .5v19M7 15h12" fill="none" stroke="#666" />
              <rect x="10" y="4" width="6" height="6" fill="none" stroke="#666" />
            </svg>
          </div>
          <svg width="20" height="20" viewBox="0 0 20 20" className="ml-[13px] mt-[4px]">
            <path d="M.5.5h8v8h-8zM11.5.5h8v8h-8zM.5 11.5h8v8h-8zM11.5 11.5h8v8h-8z" fill="none" stroke="#666" />
          </svg>
          <svg width="20" height="20" viewBox="0 0 20 20" className="ml-[25px] mt-[4px]">
            <path d="M.5.5L10 3l9.500-2.500V19.500H.5zM10 3v17M3 6h5M3 9h5M3 12h5M12 6h5M12 9h5M12 12h5" fill="none" stroke="#666" />
          </svg>
          <svg width="20" height="20" viewBox="0 0 20 20" className="ml-[25px] mt-[3px]">
            <path d="M0 1h20" stroke="#666" strokeWidth="2.500" />
            <path d="M2 2h16v14H2zM6 8h8M10 16v4" fill="none" stroke="#666" />
          </svg>
          <div className="ml-[18px] w-[12px] h-[3px] mt-[10px] bg-[#777]" />
          <div className="relative ml-[5px] w-[150px] h-[1px] mt-[11px] bg-[#a8a8a8]">
            <div className="absolute left-[47px] -top-[11px] w-[6px] h-[22px] bg-[#777]" />
            <div className="absolute left-[75px] -top-[4px] w-[1px] h-[9px] bg-[#a8a8a8]" />
          </div>
          <svg width="14" height="14" viewBox="0 0 14 14" className="ml-[5px] mt-[5px]">
            <path d="M7 0v14M0 7h14" stroke="#777" strokeWidth="3" />
          </svg>
          <span className="ml-[17px]">69%</span>
          <svg width="17" height="20" viewBox="0 0 17 20" className="ml-[15px] mt-[4px]">
            <path d="M.5.5h16v19H.5zM8.500 3v3M6.500 4.500l2-2 2 2M3 10h3M12 10h3" fill="none" stroke="#666" />
          </svg>
        </div>
      </div>

      {/* Dialog */}
      <div className="absolute left-[403px] top-[216px] w-[1115px] h-[576px] flex flex-col bg-[#eeeeee] border border-[#6e6e6e] shadow-[0_2px_24px_rgba(0,0,0,0.28)]">
        <div className="h-[45px] shrink-0 bg-white flex items-center pl-[11px] pr-[19px] text-[17px] text-black">
          <span>Choose a SmartArt Graphic</span>
          <span className="ml-auto text-[18px] text-[#333]">?</span>
          <X size={30} strokeWidth={0.9} className="ml-[51px] text-[#333]" />
        </div>
        <div className="flex ml-[9px] mt-[10px] h-[466px]">
          <div className="w-[266px] shrink-0 bg-white border border-[#ababab] pt-[9px] pl-[10px]">
            {categories.map((c) => (
              <div
                key={c.t}
                className={`w-[244px] h-[44px] flex items-center pl-[6px] text-[16.6px] ${c.t === "Relationship" ? "bg-[#c4c4c4] text-[#333]" : "text-[#666]"}`}
              >
                {c.icon}
                <span className="ml-[19px] mt-[2px]">{c.t}</span>
              </div>
            ))}
          </div>
          <div className="relative w-[479px] shrink-0 bg-white border-y border-r border-[#ababab] overflow-hidden">
            <div className="-mt-[50px] ml-[10px] grid grid-cols-[repeat(4,108.33px)] auto-rows-[84px]">
              {thumbs.map((row, r) =>
                row.map((cell, c) => (
                  <svg
                    key={`${r}-${c}`}
                    width="108.33"
                    height="84"
                    viewBox={`${40 + 325 * c} ${-128 + 252 * r} 325 252`}
                    className="overflow-visible"
                  >
                    {cell}
                  </svg>
                )),
              )}
            </div>
            <div className="absolute left-[452px] top-[2px] w-[24px] h-[460px] bg-[#f0f0f0] flex flex-col items-center">
              <ChevronUp size={20} strokeWidth={2.5} className="mt-[5px] text-[#555]" />
              <div className="absolute left-0 top-[215px] w-full h-[218px] bg-[#c8c8c8]" />
              <ChevronDown size={20} strokeWidth={2.5} className="absolute bottom-[2px] text-[#555]" />
            </div>
          </div>
          <div className="w-[351px] shrink-0 bg-white border-y border-r border-[#ababab] flex flex-col">
            <div className="w-[263px] ml-[38px] mt-[16px] flex flex-wrap justify-center gap-x-[13px] gap-y-[12.5px]">
              {blocks.map((b) => (
                <div
                  key={b}
                  className={`w-[125px] h-[75px] bg-gradient-to-b ${b} shadow-[0_1px_3px_rgba(0,0,0,0.35)] flex items-center justify-center`}
                >
                  <div className="w-[33px] h-[3px] bg-white ml-[2px]" />
                </div>
              ))}
            </div>
            <div className="ml-[13px] mt-[23px] text-[15.1px] leading-[20px] font-bold text-[#5f5f5f]">
              Basic Block List
            </div>
            <div className="ml-[2px] mt-[6px] w-[345px] h-[147px] border border-[#ababab] px-[9px] pt-[1px] text-[14.85px] leading-[21px] text-[#666]">
              Use to show non-sequential or grouped blocks of information. Maximizes both horizontal and vertical
              display space for shapes.
            </div>
          </div>
        </div>
        <div className="flex ml-[865px] mt-[6px] gap-[16px]">
          <div className="w-[111px] h-[36px] bg-[#e1e1e1] border-2 border-[#0078d7] flex items-center justify-center text-[15px] text-[#222]">
            OK
          </div>
          <div className="w-[111px] h-[36px] bg-[#e1e1e1] border border-[#adadad] flex items-center justify-center text-[15px] text-[#222]">
            Cancel
          </div>
        </div>
      </div>
    </div>
  );
}
